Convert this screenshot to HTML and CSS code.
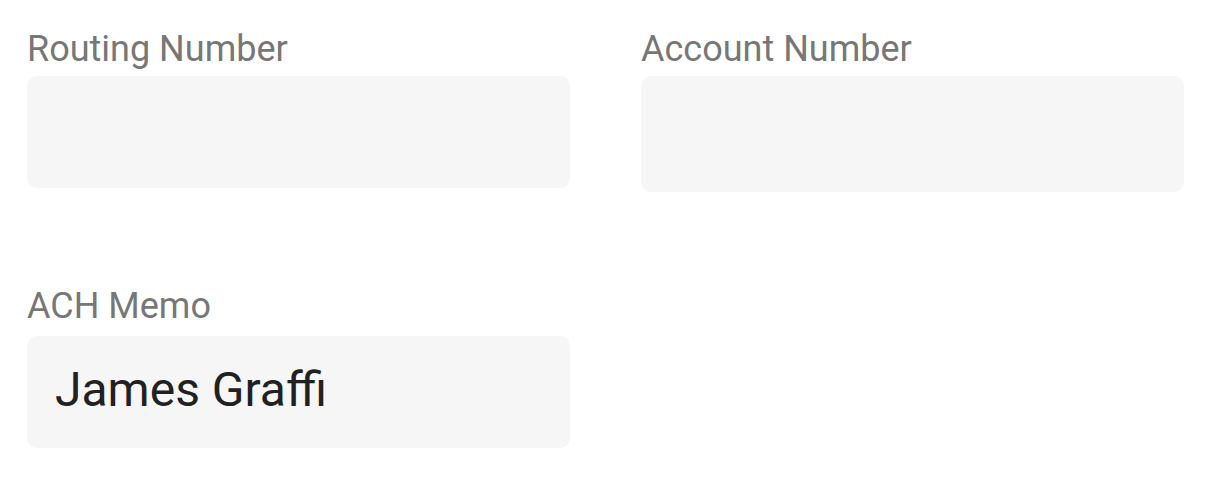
FILE: index.html
```html
<!DOCTYPE html>
<html lang="en">
<head>
  <meta charset="UTF-8" />
  <title>Bank Details</title>
  <link rel="stylesheet" href="styles.css">
</head>
<body>

  <form class="bank-form">
    <div class="field-row">
      <div class="field">
        <label for="routingInput">Routing Number</label>
        <input type="text" id="routingInput" />
      </div>
      <div class="field">
        <label for="accountInput">Account Number</label>
        <input type="text" id="accountInput" class="tall" />
      </div>
    </div>

    <div class="field-row">
      <div class="field">
        <label for="memoInput">ACH Memo</label>
        <input type="text" id="memoInput" value="James Graffi" />
      </div>
    </div>
  </form>

</body>
</html>
```

FILE: styles.css
```css
body {
  margin: 0;
  font-family: Roboto, "Noto Sans", sans-serif;
  background: #fff;
}

.bank-form {
  padding: 28px 0 0 27px;
}

.field-row {
  display: grid;
  grid-template-columns: 543px 543px;
  column-gap: 71px;
  margin-bottom: 93px;
}

.field-row:last-child {
  margin-bottom: 0;
}

.field {
  display: flex;
  flex-direction: column;
}

label {
  font-size: 36px;
  color: #777;
  margin-bottom: 6px;
}

.field-row:last-child label {
  margin-bottom: 9px;
}

input[type="text"] {
  font-family: Roboto, "Noto Sans", sans-serif;
  font-size: 48px;
  color: #212121;
  background: #f6f6f6;
  border: none;
  border-radius: 10px;
  height: 112px;
  padding: 0 28px 6px;
  box-sizing: border-box;
  outline: none;
}

input.tall {
  height: 116px;
}
```
